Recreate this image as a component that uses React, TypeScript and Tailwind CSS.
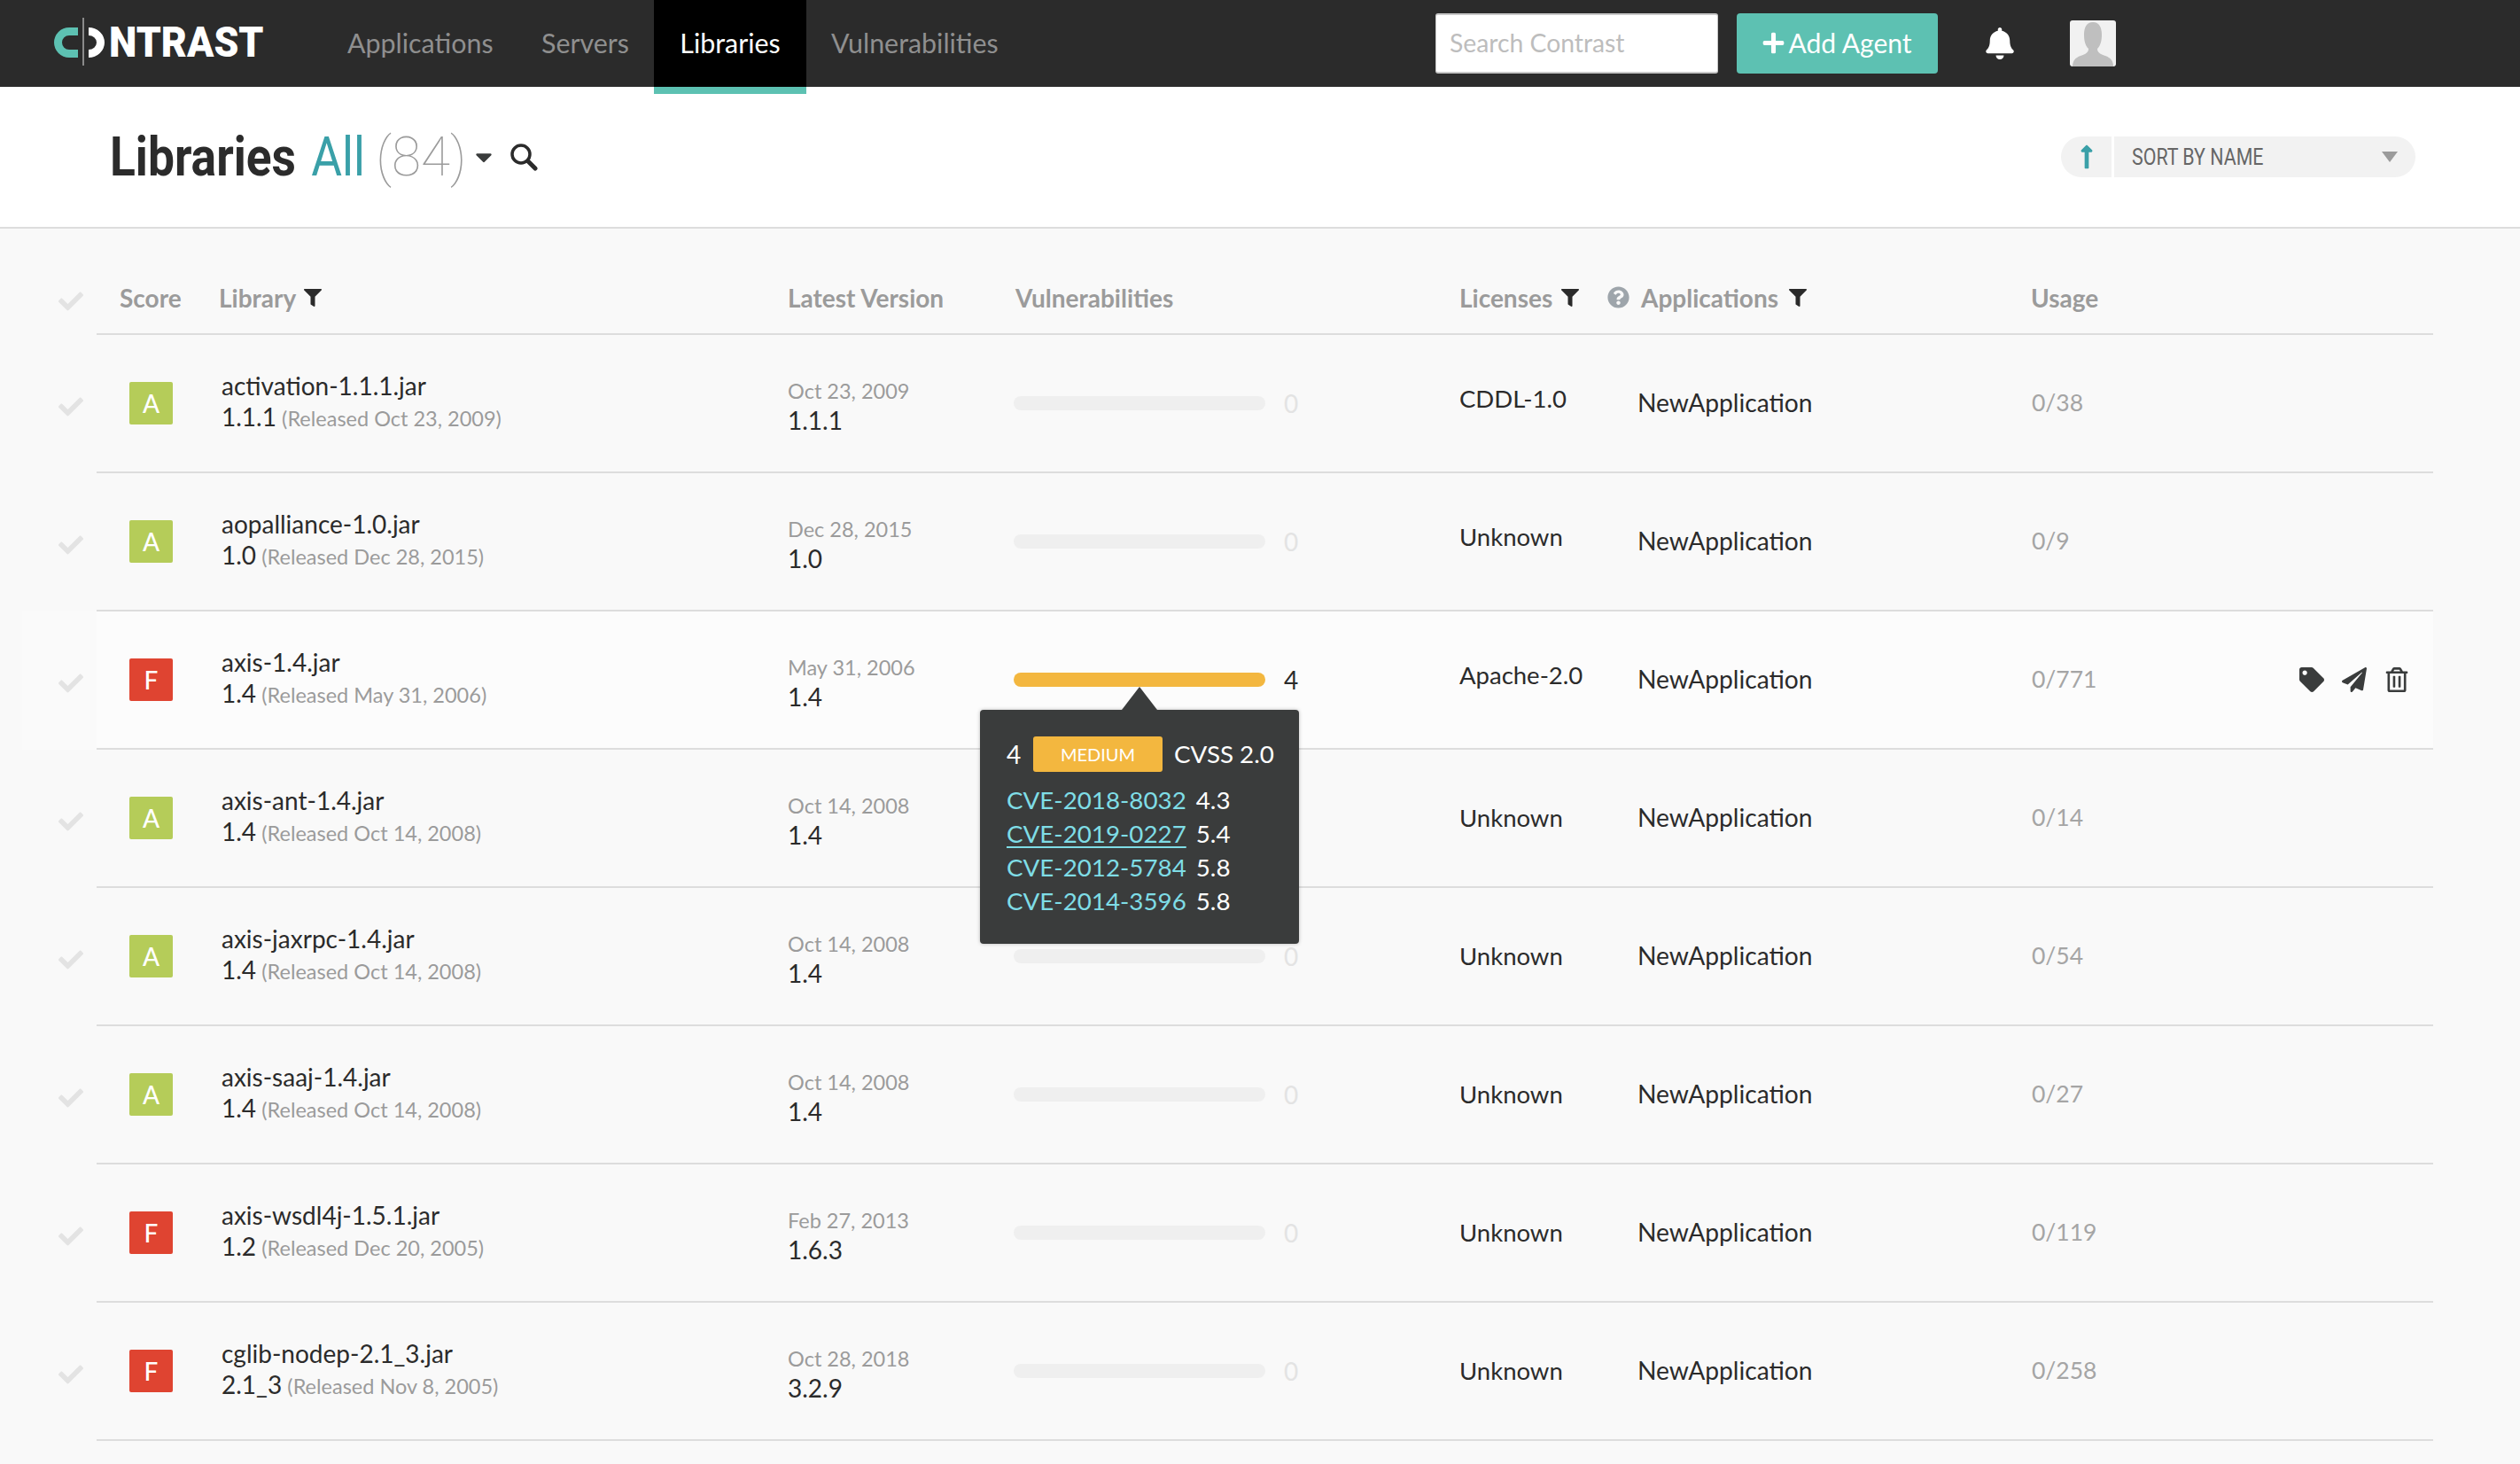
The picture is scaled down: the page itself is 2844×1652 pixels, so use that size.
import React from "react";
import { FaBell, FaCheck, FaFilter, FaPaperPlane, FaPlus, FaQuestionCircle, FaRegTrashAlt, FaTag, FaLongArrowAltUp, FaCaretDown } from "react-icons/fa";

type Row = { name: string; ver: string; rel: string; date: string; latest: string; lic: string; use: string; g: "A" | "F" };
const rows: Row[] = [
  { name: "activation-1.1.1.jar", ver: "1.1.1", rel: "Oct 23, 2009", date: "Oct 23, 2009", latest: "1.1.1", lic: "CDDL-1.0", use: "0/38", g: "A" },
  { name: "aopalliance-1.0.jar", ver: "1.0", rel: "Dec 28, 2015", date: "Dec 28, 2015", latest: "1.0", lic: "Unknown", use: "0/9", g: "A" },
  { name: "axis-1.4.jar", ver: "1.4", rel: "May 31, 2006", date: "May 31, 2006", latest: "1.4", lic: "Apache-2.0", use: "0/771", g: "F" },
  { name: "axis-ant-1.4.jar", ver: "1.4", rel: "Oct 14, 2008", date: "Oct 14, 2008", latest: "1.4", lic: "Unknown", use: "0/14", g: "A" },
  { name: "axis-jaxrpc-1.4.jar", ver: "1.4", rel: "Oct 14, 2008", date: "Oct 14, 2008", latest: "1.4", lic: "Unknown", use: "0/54", g: "A" },
  { name: "axis-saaj-1.4.jar", ver: "1.4", rel: "Oct 14, 2008", date: "Oct 14, 2008", latest: "1.4", lic: "Unknown", use: "0/27", g: "A" },
  { name: "axis-wsdl4j-1.5.1.jar", ver: "1.2", rel: "Dec 20, 2005", date: "Feb 27, 2013", latest: "1.6.3", lic: "Unknown", use: "0/119", g: "F" },
  { name: "cglib-nodep-2.1_3.jar", ver: "2.1_3", rel: "Nov 8, 2005", date: "Oct 28, 2018", latest: "3.2.9", lic: "Unknown", use: "0/258", g: "F" },
];

function Tooltip() {
  return (
    <div className="absolute left-[-38px] top-[55px] z-10 w-[360px] h-[264px] rounded-[4px] bg-[#3a3c3c] pl-[30px] pt-[30px] text-[28px] text-white shadow-[0_0_4px_rgba(0,0,0,0.25)]">
      <div className="absolute left-[160px] top-[-26px] h-0 w-0 border-x-[20px] border-b-[26px] border-x-transparent border-b-[#3a3c3c]" />
      <div className="flex items-center h-[40px] leading-[38px]">
        <span className="w-[30px]">4</span>
        <span className="flex h-[40px] w-[146px] items-center justify-center rounded-[3px] bg-[#f3b73f] text-[20px]">MEDIUM</span>
        <span className="ml-[13px] text-[27.75px]">CVSS 2.0</span>
      </div>
      <div className="mt-[13px] text-[27.75px] leading-[38px]">
        {[["CVE-2018-8032", "4.3"], ["CVE-2019-0227", "5.4"], ["CVE-2012-5784", "5.8"], ["CVE-2014-3596", "5.8"]].map(([c, s], i) => (
          <div key={c} className="flex">
            <span className={i === 1 ? "text-[#7fdde6] underline underline-offset-[4px]" : "text-[#7fdde6]"}>{c}</span>
            <span className="ml-[11px]">{s}</span>
          </div>
        ))}
      </div>
    </div>
  );
}

function LibRow({ r, hot, lift }: { r: Row; hot: boolean; lift: boolean }) {
  return (
    <div className="flex h-[156px]">
      <div className={`flex items-center justify-end pr-[15px] pt-[6px] text-[28px] text-[#e3e3e3] ${hot ? "ml-[25px] w-[84px] bg-[#fafafa]" : "w-[109px]"}`}><FaCheck /></div>
      <div className={`flex w-[2637px] items-center border-b-2 border-[#dddddd] text-[28px] text-[#2b2b2b] ${hot ? "bg-[#fcfcfc]" : ""}`}>
        <div className="w-[141px] pl-[37px]">
          <div className={`flex h-[48px] w-[49px] items-center justify-center rounded-[2px] text-[28px] font-medium text-white ${r.g === "A" ? "bg-[#b5cc59]" : "bg-[#df4431]"}`}>{r.g}</div>
        </div>
        <div className="w-[639px] pb-[4px]">
          <div className="leading-[36px]">{r.name}</div>
          <div className="leading-[34px]">{r.ver} <span className="ml-[-1px] text-[23.5px] text-[#9b9b9b]">(Released {r.rel})</span></div>
        </div>
        <div className="w-[255px] pt-[6px]">
          <div className="text-[23.5px] leading-[32px] text-[#9b9b9b]">{r.date}</div>
          <div className="leading-[34px]">{r.latest}</div>
        </div>
        <div className="relative flex w-[503px] items-center">
          <div className={`h-[16px] w-[284px] rounded-full ${hot ? "bg-[#f3b73f]" : "bg-[#efefef]"}`} />
          <span className={`ml-[21px] ${hot ? "" : "text-[#e3e3e3]"}`}>{hot ? "4" : "0"}</span>
          {hot && <Tooltip />}
        </div>
        <div className={`w-[201px] text-[27.5px] ${lift ? "pb-[10px]" : ""}`}>{r.lic}</div>
        <div className="w-[445px] pb-[1px] text-[28.2px]">NewApplication</div>
        <div className="w-[302px] text-[26.5px] text-[#a5a5a5]">{r.use}</div>
        {hot && (
          <div className="flex items-center gap-[20px] text-[#3a3c3c]">
            <FaTag className="text-[28px] w-[28px]" />
            <FaPaperPlane className="text-[28px]" />
            <FaRegTrashAlt className="text-[28px]" />
          </div>
        )}
      </div>
    </div>
  );
}

export default function App() {
  return (
    <div className="min-h-[1652px] overflow-hidden bg-[#f9f9f9] font-['Lato','Liberation_Sans',sans-serif]">
      <header className="flex h-[98px] bg-[#2b2b2b]">
        <div className="flex w-[392px] items-center pb-[4px] pl-[61px]">
          <svg width="57" height="54" viewBox="0 0 57 54" className="shrink-0">
            <path d="M27 11H17A17 17 0 0 0 17 45H27V36H17A8 8 0 0 1 17 20H27Z" fill="#5dc1b2" />
            <rect x="32" y="0" width="2" height="54" fill="#8a8a8a" />
            <path d="M39 11A18 17 0 0 1 39 45V36A9 8 0 0 0 39 20Z" fill="#fff" />
          </svg>
          <span className="ml-[5px] mt-[2px] inline-block origin-left scale-x-[0.93] font-['Roboto',sans-serif] text-[48px] font-black leading-none text-white">NTRAST</span>
        </div>
        <nav className="flex text-[30.4px] text-[#8f8f8f]">
          <a className="flex h-[98px] w-[219px] items-center">Applications</a>
          <a className="flex h-[98px] w-[127px] items-center">Servers</a>
          <a className="relative flex h-[98px] w-[172px] items-center justify-center bg-black text-white">
            Libraries
            <span className="absolute left-0 right-0 top-[98px] h-[8px] bg-[#5dc1b2]" />
          </a>
          <a className="ml-[28px] flex h-[98px] items-center">Vulnerabilities</a>
        </nav>
        <div className="ml-auto flex items-center">
          <div className="flex h-[68px] w-[319px] items-center rounded-[3px] border-y-2 border-x border-[#c8c8c8] bg-white pb-[2px] pl-[15px] text-[28.3px] text-[#bdbdbd]">Search Contrast</div>
          <button className="ml-[21px] flex h-[68px] w-[227px] items-center justify-center gap-[3px] rounded-[4px] bg-[#5dc1b2] pb-[2px] pr-[1px] text-[30px] text-white"><FaPlus className="text-[27px]" />Add Agent</button>
          <FaBell className="ml-[52px] text-[36px] text-white" />
          <div className="ml-[61px] mr-[456px] flex h-[52px] w-[52px] items-end justify-center overflow-hidden rounded-[3px] bg-[#f1f1f1]">
            <svg width="52" height="52" viewBox="0 0 52 52"><path d="M26 2c7 0 10 6 10 14 0 6-1 12-5 16 0 4 3 6 9 8 6 2 9 6 9 12H3c0-6 3-10 9-12 6-2 9-4 9-8-4-4-5-10-5-16C16 8 19 2 26 2z" fill="#bfbfbf" /></svg>
          </div>
        </div>
      </header>
      <div className="flex h-[160px] items-center border-b-2 border-[#dddddd] bg-white">
        <div className="flex items-center pl-[124px]">
          <div className="w-[407px]">
            <div className="flex origin-left scale-x-[0.86] items-baseline whitespace-nowrap font-['Roboto',sans-serif] text-[62px] leading-none">
              <span className="font-bold text-[#2b2b2b]">Libraries</span>
              <span className="ml-[20px] font-normal text-[#3aa0a8]">All</span>
              <span className="ml-[14px] inline-block origin-left scale-x-[1.13] font-thin text-[#9b9b9b]">(84)</span>
            </div>
          </div>
          <FaCaretDown className="text-[30px] text-[#3a3c3c]" />
          <svg width="32" height="32" viewBox="0 0 32 32" className="ml-[14px]">
            <circle cx="13" cy="13" r="10" fill="none" stroke="#2b2b2b" strokeWidth="3.5" />
            <path d="M21 21l8 8" stroke="#2b2b2b" strokeWidth="5" strokeLinecap="round" />
          </svg>
        </div>
        <div className="ml-auto mr-[118px] flex h-[46px] w-[400px] overflow-hidden rounded-[23px]">
          <div className="flex w-[57px] items-center justify-center bg-[#f2f2f2] text-[30px] text-[#3aa0a8]"><FaLongArrowAltUp /></div>
          <div className="ml-[3px] flex flex-1 items-center bg-[#f2f2f2] pl-[20px] text-[#666666]">
            <span className="mt-[2px] inline-block w-[150px] origin-left scale-x-[0.855] whitespace-nowrap font-['Roboto',sans-serif] text-[25px] font-normal">SORT BY NAME</span>
            <span className="ml-auto mr-[20px] h-0 w-0 border-x-[9px] border-t-[12px] border-x-transparent border-t-[#9b9b9b]" />
          </div>
        </div>
      </div>
      <div className="flex h-[120px]">
        <div className="flex w-[109px] items-center justify-end pr-[15px] pt-[44px] text-[28px] text-[#e3e3e3]"><FaCheck /></div>
        <div className="flex w-[2637px] items-center border-b-2 border-[#dddddd] pt-[37px] text-[28px] font-bold text-[#9b9b9b]">
          <div className="w-[138px] pl-[26px]">Score</div>
          <div className="flex w-[642px] items-center">Library<FaFilter className="ml-[9px] text-[20px] text-[#2b2b2b]" /></div>
          <div className="w-[257px]">Latest Version</div>
          <div className="w-[501px]">Vulnerabilities</div>
          <div className="flex w-[167px] items-center">Licenses<FaFilter className="ml-[10px] text-[20px] text-[#2b2b2b]" /></div>
          <div className="flex w-[478px] items-center"><FaQuestionCircle className="mr-[13px] text-[25px] text-[#9ea5ab]" />Applications<FaFilter className="ml-[12px] text-[20px] text-[#2b2b2b]" /></div>
          <div>Usage</div>
        </div>
      </div>
      {rows.map((r, i) => <LibRow key={r.name} r={r} hot={i === 2} lift={i < 3} />)}
    </div>
  );
}
